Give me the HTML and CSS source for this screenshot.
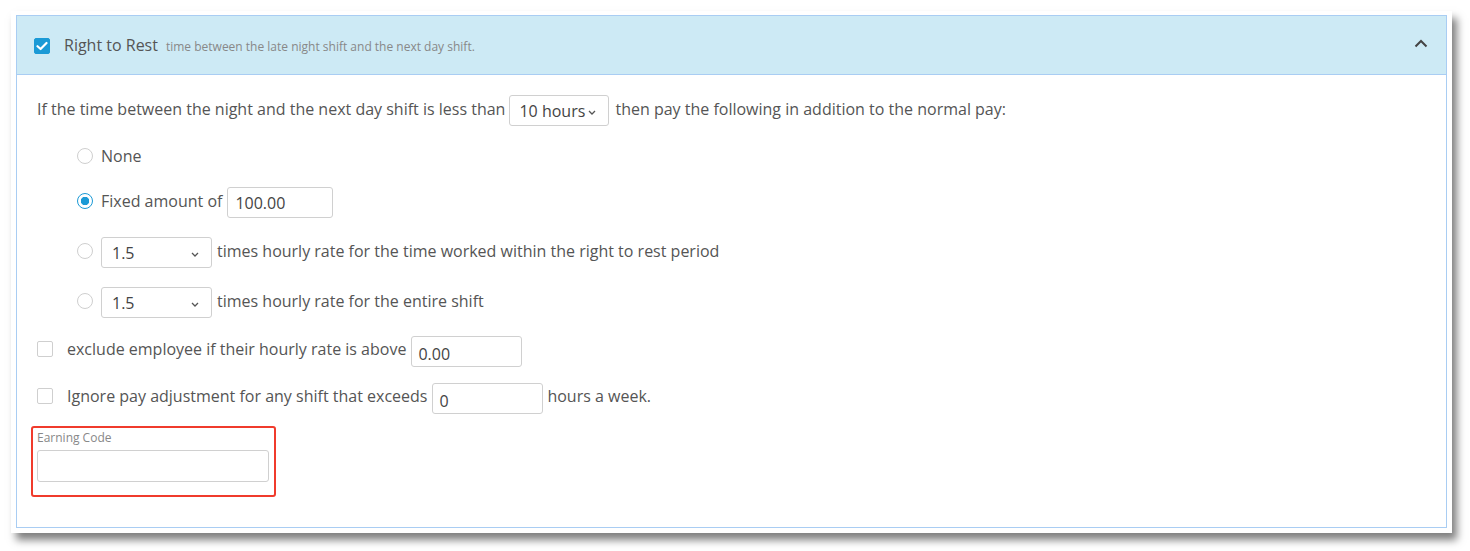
FILE: index.html
```html
<!DOCTYPE html>
<html>
<head>
<meta charset="utf-8">
<link rel="stylesheet" href="styles.css">
</head>
<body>
<div class="frame">
  <div class="panel">
    <div class="panel-header">
      <span class="cbox checked">
        <svg width="12" height="10" viewBox="0 0 12 10"><path d="M1.5 5.2 L4.6 8 L10.5 2" fill="none" stroke="#fff" stroke-width="2.2" stroke-linecap="round" stroke-linejoin="round"/></svg>
      </span>
      <span class="title">Right to Rest</span>
      <span class="subtitle">time between the late night shift and the next day shift.</span>
      <svg class="chev" width="14" height="9" viewBox="0 0 14 9"><path d="M1.5 7.5 L7 2 L12.5 7.5" fill="none" stroke="#444" stroke-width="2"/></svg>
    </div>
    <div class="panel-body">
      <div class="row r1">
        <span>If the time between the night and the next day shift is less than</span>
        <span class="sel sel-hours">10 hours<svg class="caret" width="8" height="5" viewBox="0 0 8 5"><path d="M1 1 L4 4 L7 1" fill="none" stroke="#555" stroke-width="1.3"/></svg></span>
        <span class="after">then pay the following in addition to the normal pay:</span>
      </div>
      <div class="row opt r2">
        <span class="radio"></span><span>None</span>
      </div>
      <div class="row opt r3">
        <span class="radio on"></span><span>Fixed amount of</span>
        <span class="inp inp-fixed">100.00</span>
      </div>
      <div class="row opt r4">
        <span class="radio"></span>
        <span class="sel sel-rate">1.5<svg class="caret" width="8" height="5" viewBox="0 0 8 5"><path d="M1 1 L4 4 L7 1" fill="none" stroke="#555" stroke-width="1.3"/></svg></span>
        <span>times hourly rate for the time worked within the right to rest period</span>
      </div>
      <div class="row opt r5">
        <span class="radio"></span>
        <span class="sel sel-rate">1.5<svg class="caret" width="8" height="5" viewBox="0 0 8 5"><path d="M1 1 L4 4 L7 1" fill="none" stroke="#555" stroke-width="1.3"/></svg></span>
        <span>times hourly rate for the entire shift</span>
      </div>
      <div class="row chk r6">
        <span class="cbox"></span><span>exclude employee if their hourly rate is above</span>
        <span class="inp inp-small">0.00</span>
      </div>
      <div class="row chk r7">
        <span class="cbox"></span><span>Ignore pay adjustment for any shift that exceeds</span>
        <span class="inp inp-small">0</span><span>hours a week.</span>
      </div>
      <div class="earning">
        <div class="label">Earning Code</div>
        <div class="inp inp-code"></div>
      </div>
    </div>
  </div>
</div>
</body>
</html>
```
FILE: styles.css
```css
html, body { margin: 0; padding: 0; background: #fff; }
body {
  font-family: "Open Sans", "Liberation Sans", sans-serif;
  color: #555;
  padding: 11px 0 0 11px;
  box-sizing: border-box;
  height: 551px;
  overflow: hidden;
}
.frame {
  width: 1431px;
  height: 513px;
  background: #fff;
  padding: 4px 5px 5px 5px;
  box-shadow: 5px 7px 8px rgba(0,0,0,0.5);
}
.panel {
  box-sizing: border-box;
  width: 1431px;
  height: 513px;
  border: 1px solid #a9cdf3;
  display: flex;
  flex-direction: column;
}
.panel-header {
  height: 58px;
  background: #cdeaf5;
  border-bottom: 1px solid #a9cdf3;
  display: flex;
  align-items: center;
  padding: 0 18px 0 17px;
}
.cbox {
  box-sizing: border-box;
  width: 16px;
  height: 16px;
  border: 1px solid #cfcfcf;
  border-radius: 2px;
  background: #fff;
  display: inline-flex;
  align-items: center;
  justify-content: center;
  flex: none;
}
.cbox.checked {
  background: #1b9ad6;
  border-color: #1b9ad6;
}
.panel-header .cbox { margin-top: 1px; }
.title {
  font-size: 16px;
  color: #555;
  margin-left: 14px;
  margin-top: -1px;
}
.subtitle {
  font-size: 12px;
  color: #888;
  margin-left: 8px;
  margin-top: 2px;
}
.chev { margin-left: auto; margin-top: -3px; }
.panel-body {
  padding: 20px 20px 0 20px;
  font-size: 16px;
}
.row {
  display: flex;
  align-items: center;
  height: 31px;
  white-space: nowrap;
}
.row > span:not(.sel):not(.inp) { margin-top: -3px; }
.chk > span:not(.sel):not(.inp) { margin-top: -6px; }
.opt { padding-left: 40px; }
.r2 { margin-top: 16px; }
.r3 { margin-top: 14px; }
.r4, .r5 { margin-top: 19px; }
.r6 { margin-top: 18px; }
.r7 { margin-top: 16px; }
.sel, .inp {
  box-sizing: border-box;
  height: 31px;
  border: 1px solid #d0d0d0;
  border-radius: 3px;
  background: #fff;
  display: inline-flex;
  align-items: center;
  color: #444;
}
.sel-hours {
  width: 100px;
  margin: 0 5px 0 4px;
  padding-left: 9px;
  padding-top: 1px;
}
.sel-hours .caret { margin-left: 3px; margin-top: 2px; }
.after { margin-left: 1px; }
.row > .radio {
  box-sizing: border-box;
  width: 16px;
  height: 16px;
  border: 1px solid #cfcfcf;
  border-radius: 50%;
  margin: 0 8px 0 0;
  background: #fff;
  flex: none;
}
.row > .radio.on {
  border: 1.5px solid #1b9ad6;
  background: radial-gradient(circle, #1b9ad6 0 4px, #fff 4.5px);
}
.inp-fixed {
  width: 106px;
  margin-left: 5px;
  padding-left: 7px;
  padding-top: 1px;
}
.sel-rate {
  width: 111px;
  margin-right: 5px;
  padding: 1px 12px 0 10px;
  justify-content: space-between;
}
.sel-rate .caret { margin-top: 2px; }
.row > .cbox { margin: 0 14px 0 0; }
.chk > .cbox { margin-top: -3px; }
.inp-small {
  width: 111px;
  padding-left: 6px;
  padding-top: 4px;
  margin: 0 4px 0 5px;
}
.earning {
  box-sizing: border-box;
  width: 245px;
  height: 71px;
  margin-top: 12px;
  margin-left: -6px;
  border: 2.5px solid #f03b2c;
  border-radius: 3px;
  padding: 1px 0 0 4px;
}
.label {
  font-size: 12px;
  color: #888;
  line-height: 17px;
}
.inp-code {
  width: 232px;
  height: 32px;
  margin-top: 4px;
}
```
